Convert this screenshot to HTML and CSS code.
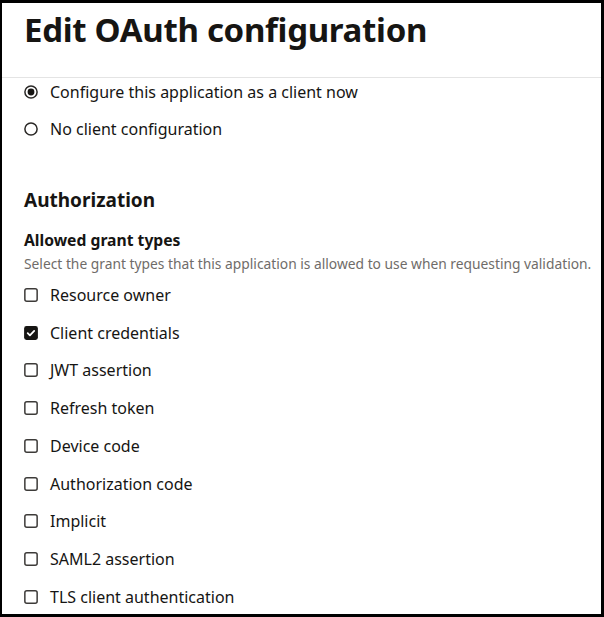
FILE: index.html
```html
<!DOCTYPE html>
<html>
<head>
<meta charset="utf-8">
<link rel="stylesheet" href="styles.css">
</head>
<body>
<div class="panel">
  <header class="head">
    <h1 class="title">Edit OAuth configuration</h1>
  </header>
  <div class="body">
    <div class="options">
      <label class="row"><svg class="ico" viewBox="0 0 14 14" width="14" height="14"><circle cx="7" cy="7" r="6.1" fill="none" stroke="#2a2826" stroke-width="1.5"/><circle cx="7" cy="7" r="3.4" fill="#161513"/></svg><span>Configure this application as a client now</span></label>
      <label class="row"><svg class="ico" viewBox="0 0 14 14" width="14" height="14"><circle cx="7" cy="7" r="6.1" fill="none" stroke="#2a2826" stroke-width="1.5"/></svg><span>No client configuration</span></label>
    </div>
    <h2 class="section">Authorization</h2>
    <h3 class="label">Allowed grant types</h3>
    <p class="help">Select the grant types that this application is allowed to use when requesting validation.</p>
    <div class="checks">
      <label class="row"><svg class="ico" viewBox="0 0 14 14" width="14" height="14"><rect x="0.85" y="0.85" width="12.3" height="12.3" rx="2" fill="none" stroke="#3d3b39" stroke-width="1.5"/></svg><span>Resource owner</span></label>
      <label class="row"><svg class="ico" viewBox="0 0 14 14" width="14" height="14"><rect x="0.1" y="0.1" width="13.8" height="13.8" rx="2.4" fill="#161513"/><path d="M3.7 7.2 L5.9 9.3 L10.2 4.9" fill="none" stroke="#fff" stroke-width="1.8" stroke-linecap="round" stroke-linejoin="round"/></svg><span>Client credentials</span></label>
      <label class="row"><svg class="ico" viewBox="0 0 14 14" width="14" height="14"><rect x="0.85" y="0.85" width="12.3" height="12.3" rx="2" fill="none" stroke="#3d3b39" stroke-width="1.5"/></svg><span>JWT assertion</span></label>
      <label class="row"><svg class="ico" viewBox="0 0 14 14" width="14" height="14"><rect x="0.85" y="0.85" width="12.3" height="12.3" rx="2" fill="none" stroke="#3d3b39" stroke-width="1.5"/></svg><span>Refresh token</span></label>
      <label class="row"><svg class="ico" viewBox="0 0 14 14" width="14" height="14"><rect x="0.85" y="0.85" width="12.3" height="12.3" rx="2" fill="none" stroke="#3d3b39" stroke-width="1.5"/></svg><span>Device code</span></label>
      <label class="row"><svg class="ico" viewBox="0 0 14 14" width="14" height="14"><rect x="0.85" y="0.85" width="12.3" height="12.3" rx="2" fill="none" stroke="#3d3b39" stroke-width="1.5"/></svg><span>Authorization code</span></label>
      <label class="row"><svg class="ico" viewBox="0 0 14 14" width="14" height="14"><rect x="0.85" y="0.85" width="12.3" height="12.3" rx="2" fill="none" stroke="#3d3b39" stroke-width="1.5"/></svg><span>Implicit</span></label>
      <label class="row"><svg class="ico" viewBox="0 0 14 14" width="14" height="14"><rect x="0.85" y="0.85" width="12.3" height="12.3" rx="2" fill="none" stroke="#3d3b39" stroke-width="1.5"/></svg><span>SAML2 assertion</span></label>
      <label class="row"><svg class="ico" viewBox="0 0 14 14" width="14" height="14"><rect x="0.85" y="0.85" width="12.3" height="12.3" rx="2" fill="none" stroke="#3d3b39" stroke-width="1.5"/></svg><span>TLS client authentication</span></label>
    </div>
  </div>
</div>
</body>
</html>
```
FILE: styles.css
```css
html, body {
  margin: 0;
  padding: 0;
  background: #fff;
}
.panel {
  width: 604px;
  height: 617px;
  box-sizing: border-box;
  border: 3px solid #000;
  border-left-width: 2px;
  overflow: hidden;
  font-family: "Noto Sans", "Open Sans", sans-serif;
  color: #161513;
}
.head {
  height: 75px;
  box-sizing: border-box;
  border-bottom: 1px solid #e4e4e4;
  padding: 0 0 0 22px;
}
.title {
  margin: 0;
  padding-top: 5px;
  font-size: 33px;
  line-height: 44px;
  font-weight: 700;
  letter-spacing: -0.3px;
}
.body {
  padding-left: 22px;
}
.options {
  display: flex;
  flex-direction: column;
  gap: 10px;
}
.row {
  display: flex;
  align-items: center;
  height: 37.75px;
  font-size: 16px;
  gap: 12px;
}
.options .row {
  height: 27px;
}
.ico {
  flex: none;
  display: block;
}
.section {
  margin: 45px 0 0;
  font-size: 19px;
  line-height: 26px;
  font-weight: 700;
}
.label {
  margin: 16px 0 0;
  font-size: 15.7px;
  line-height: 22px;
  font-weight: 700;
}
.help {
  margin: 4px 0 0;
  font-size: 13.8px;
  line-height: 18px;
  color: #6f6c69;
}
.checks {
  margin-top: 3px;
}
```
